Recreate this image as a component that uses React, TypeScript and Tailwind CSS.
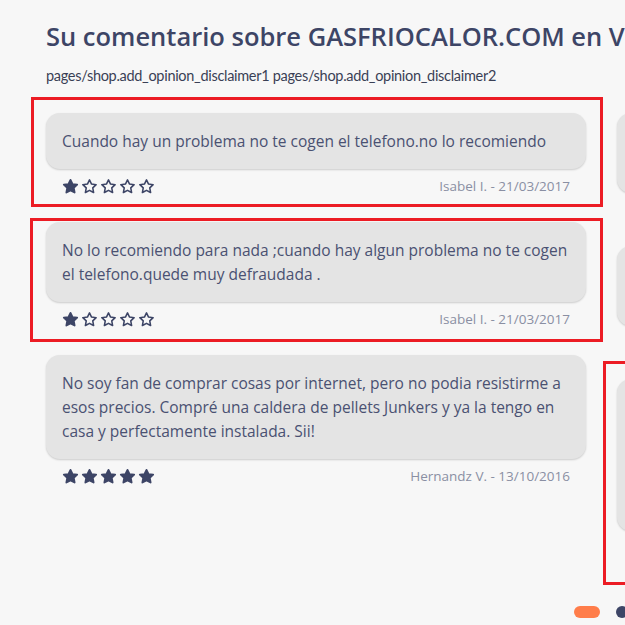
import React from 'react';

interface Review {
  text: string;
  author: string;
  date: string;
  rating: number;
  mark?: string;
}

const leftColumn: Review[] = [
  {
    text: 'Cuando hay un problema no te cogen el telefono.no lo recomiendo',
    author: 'Isabel I.',
    date: '21/03/2017',
    rating: 1,
    mark: 'top-[-16px] bottom-[-12px] left-[-15px] right-[-17px]',
  },
  {
    text: 'No lo recomiendo para nada ;cuando hay algun problema no te cogen el telefono.quede muy defraudada .',
    author: 'Isabel I.',
    date: '21/03/2017',
    rating: 1,
    mark: 'top-[-4px] bottom-[-14px] left-[-16px] right-[-17px]',
  },
  {
    text: 'No soy fan de comprar cosas por internet, pero no podia resistirme a esos precios. Compré una caldera de pellets Junkers y ya la tengo en casa y perfectamente instalada. Sii!',
    author: 'Hernandz V.',
    date: '13/10/2016',
    rating: 5,
  },
];

const rightColumn: Review[] = [
  {
    text: 'Muy buen precio y el envio llego en pocos dias, todo perfecto. Volvere a comprar en esta tienda sin ninguna duda.',
    author: 'Carlos M.',
    date: '02/09/2016',
    rating: 5,
  },
  {
    text: 'Atencion correcta, aunque la entrega tardo algo mas de lo previsto. El producto llego en buen estado y bien embalado.',
    author: 'Marta G.',
    date: '14/08/2016',
    rating: 4,
  },
  {
    text: 'Compre un aire acondicionado y me lo instalaron en la misma semana. El tecnico fue muy amable y me explico todo el funcionamiento del equipo. Los precios son de los mejores que he encontrado en internet y la atencion telefonica fue rapida. Lo recomiendo a todo el mundo que quiera ahorrar. Muy contento.',
    author: 'Jose L.',
    date: '30/06/2016',
    rating: 5,
    mark: 'top-[-18px] bottom-[-28px] left-[-14px] right-[-17px]',
  },
];

const Star: React.FC<{ filled: boolean }> = ({ filled }) => (
  <svg width="17" height="17" viewBox="0 0 24 24" className="shrink-0">
    <path
      d="M12 2.6l2.9 6 6.5.8-4.8 4.6 1.2 6.5L12 17.4l-5.8 3.1 1.2-6.5-4.8-4.6 6.5-.8z"
      fill={filled ? '#3d4566' : 'none'}
      stroke="#3d4566"
      strokeWidth={filled ? 2.6 : 2.2}
      strokeLinejoin="round"
    />
  </svg>
);

const ReviewCard: React.FC<{ review: Review }> = ({ review }) => (
  <div className="relative mb-[27px]">
    {review.mark && <div className={`absolute border-[3px] border-[#ec1c24] pointer-events-none ${review.mark}`} />}
    <div className="rounded-[14px] bg-[#e4e4e4] px-4 py-4 text-[15.5px] leading-6 text-[#4a5172] shadow-[0_1px_2px_rgba(0,0,0,0.18)]">
      {review.text}
    </div>
    <div className="mt-2 flex h-[18px] items-center justify-between px-4">
      <div className="flex gap-[2px]">
        {[1, 2, 3, 4, 5].map((n) => (
          <Star key={n} filled={n <= review.rating} />
        ))}
      </div>
      <span className="text-[13.5px] text-[#8a8fa3]">
        {review.author} - {review.date}
      </span>
    </div>
  </div>
);

export default function App() {
  return (
    <div
      className="relative h-[625px] w-full overflow-hidden bg-[#f7f7f7] pl-[46px] pt-[20px]"
      style={{ fontFamily: '"Open Sans", "Noto Sans", sans-serif' }}
    >
      <h2 className="whitespace-nowrap text-[25.5px] font-semibold leading-8 text-[#3d4566]">
        Su comentario sobre GASFRIOCALOR.COM en Votre Avis
      </h2>
      <p className="mt-[12px] whitespace-nowrap font-['Lato',sans-serif] text-[14.5px] leading-6 tracking-[-0.3px] text-[#3a3f55]">
        pages/shop.add_opinion_disclaimer1 pages/shop.add_opinion_disclaimer2
      </p>

      <div className="mt-[25px] flex gap-[31px]">
        <div className="flex w-[540px] shrink-0 flex-col">
          {leftColumn.map((r, i) => (
            <ReviewCard key={i} review={r} />
          ))}
        </div>
        <div className="flex w-[540px] shrink-0 flex-col">
          {rightColumn.map((r, i) => (
            <ReviewCard key={i} review={r} />
          ))}
        </div>
      </div>

      <div className="mt-[22px] flex items-center gap-4 pl-[528px]">
        <span className="h-3 w-[26px] shrink-0 rounded-full bg-[#ff7d4a]" />
        <span className="h-3 w-3 shrink-0 rounded-full bg-[#3d4566]" />
        <span className="h-3 w-3 shrink-0 rounded-full bg-[#3d4566]" />
      </div>
    </div>
  );
}
